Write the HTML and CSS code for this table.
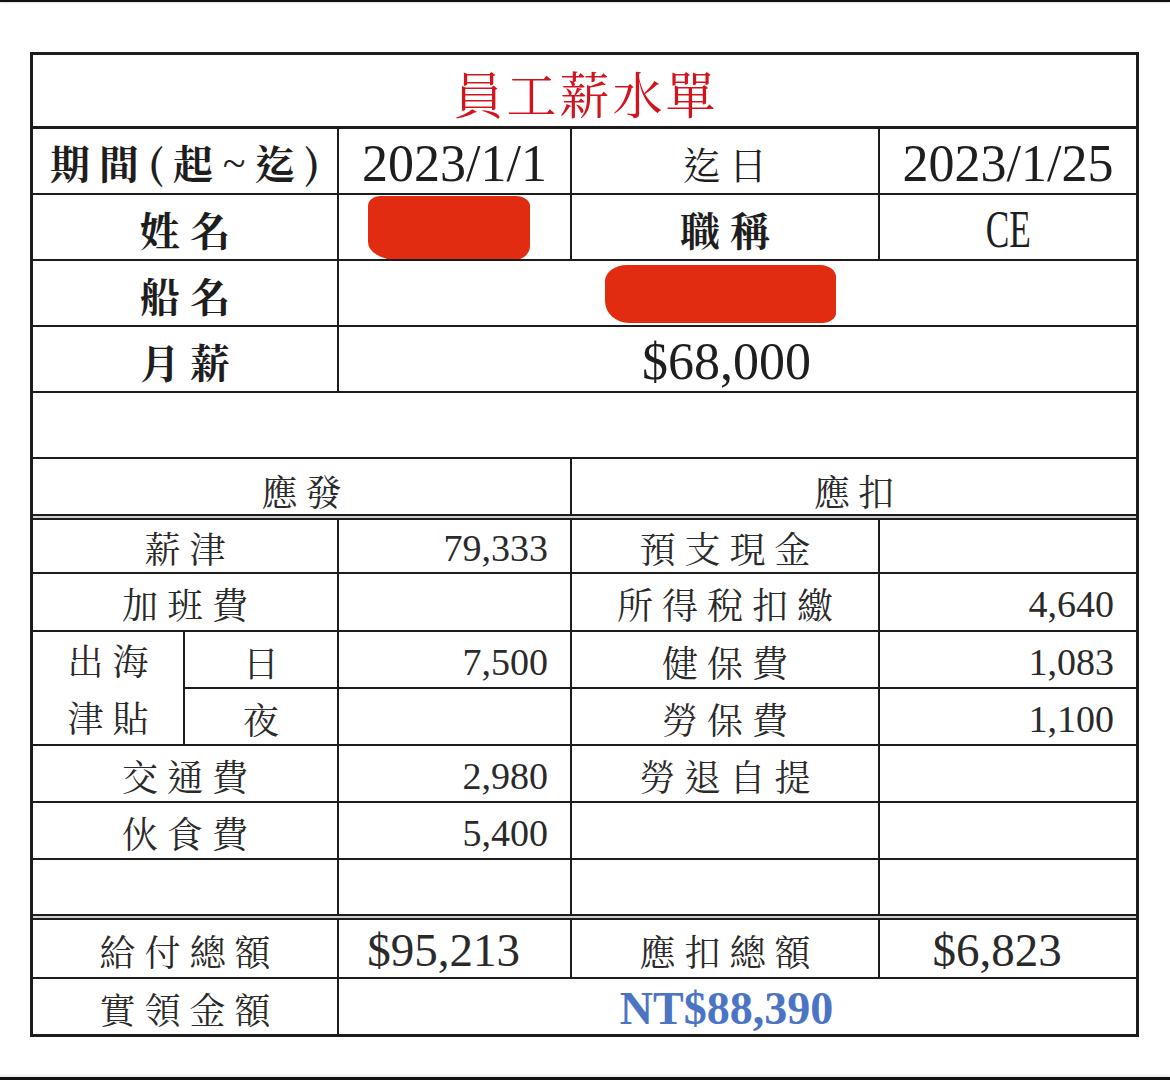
FILE: index.html
```html
<!DOCTYPE html>
<html lang="zh-Hant">
<head>
<meta charset="utf-8">
<title>員工薪水單</title>
<link rel="stylesheet" href="styles.css">
</head>
<body>
<div class="page">
  <div class="edge-top"></div>
  <div class="sheet">
    <div class="cell title span-all">員工薪水單</div>

    <div class="cell lbl-b w12 tight">期間(起~迄)</div>
    <div class="cell num-l">2023/1/1</div>
    <div class="cell lbl-m">迄日</div>
    <div class="cell num-l">2023/1/25</div>

    <div class="cell lbl-b w12">姓名</div>
    <div class="cell"><span class="redact redact-a"></span></div>
    <div class="cell lbl-b">職稱</div>
    <div class="cell num-l"><span class="narrow">CE</span></div>

    <div class="cell lbl-b w12">船名</div>
    <div class="cell w345"><span class="redact redact-b"></span></div>

    <div class="cell lbl-b w12">月薪</div>
    <div class="cell num-l w345 shift">$68,000</div>

    <div class="cell span-all"></div>

    <div class="cell lbl-h w123">應發</div>
    <div class="cell lbl-h w45">應扣</div>

    <div class="sep span-all"></div>

    <div class="cell lbl w12">薪津</div>
    <div class="cell num">79,333</div>
    <div class="cell lbl">預支現金</div>
    <div class="cell num"></div>

    <div class="cell lbl w12">加班費</div>
    <div class="cell num"></div>
    <div class="cell lbl">所得稅扣繳</div>
    <div class="cell num">4,640</div>

    <div class="cell lbl two-line rows2">出海<br>津貼</div>
    <div class="cell lbl">日</div>
    <div class="cell num">7,500</div>
    <div class="cell lbl">健保費</div>
    <div class="cell num">1,083</div>

    <div class="cell lbl">夜</div>
    <div class="cell num"></div>
    <div class="cell lbl">勞保費</div>
    <div class="cell num">1,100</div>

    <div class="cell lbl w12">交通費</div>
    <div class="cell num">2,980</div>
    <div class="cell lbl">勞退自提</div>
    <div class="cell num"></div>

    <div class="cell lbl w12">伙食費</div>
    <div class="cell num">5,400</div>
    <div class="cell"></div>
    <div class="cell"></div>

    <div class="cell w12"></div>
    <div class="cell"></div>
    <div class="cell"></div>
    <div class="cell"></div>

    <div class="sep span-all"></div>

    <div class="cell lbl w12">給付總額</div>
    <div class="cell num-m shift">$95,213</div>
    <div class="cell lbl">應扣總額</div>
    <div class="cell num-m shift">$6,823</div>

    <div class="cell lbl w12">實領金額</div>
    <div class="cell total w345 shift">NT$88,390</div>
  </div>
  <div class="edge-bottom"></div>
</div>
</body>
</html>
```

FILE: styles.css
```css
html, body {
  margin: 0;
  padding: 0;
  background: #ffffff;
}

.page {
  width: 1170px;
  height: 1080px;
  display: flex;
  flex-direction: column;
  overflow: hidden;
}

.edge-top {
  height: 2px;
  background: #111;
  box-shadow: 0 1px 2px rgba(0,0,0,0.15);
}

.edge-bottom {
  margin-top: auto;
  height: 3px;
  background: #111;
  box-shadow: 0 -2px 2px rgba(0,0,0,0.08);
}

.sheet {
  margin: 50px 0 0 30px;
  width: 1109px;
  box-sizing: border-box;
  display: grid;
  grid-template-columns: 150px 152px 231px 306px 256px;
  grid-template-rows: 72px 64px 64px 64px 64px 64px 55px 2px 52px 56px 55px 55px 55px 55px 54px 2px 57px 55px;
  gap: 2px;
  padding: 3px;
  background: #1c1c1c;
}

.cell {
  background: #fff;
  display: flex;
  align-items: center;
  justify-content: center;
  color: #1e1e1e;
  font-family: "Noto Serif CJK TC", "Noto Sans CJK TC", "Liberation Serif", serif;
  line-height: 1;
  white-space: nowrap;
  overflow: hidden;
}

.sep {
  background: #cfcfcf;
}

.span-all { grid-column: 1 / -1; }
.w12 { grid-column: span 2; }
.w123 { grid-column: span 3; }
.w45 { grid-column: span 2; }
.w345 { grid-column: span 3; }
.rows2 { grid-row: span 2; }

.title {
  border-bottom: 1px solid #1c1c1c;
  color: #d4141c;
  font-size: 50px;
  letter-spacing: 3px;
  padding-left: 3px;
  padding-top: 2px;
}

.lbl-b {
  font-weight: 700;
  font-size: 40px;
  letter-spacing: 10px;
  padding-left: 10px;
  padding-top: 4px;
}

.tight {
  letter-spacing: 9px;
  padding-left: 9px;
  padding-top: 2px;
}

.lbl-m {
  font-size: 38px;
  letter-spacing: 8px;
  padding-left: 8px;
  padding-top: 4px;
}

.lbl-h {
  font-size: 36px;
  letter-spacing: 8px;
  padding-left: 8px;
  padding-top: 8px;
  color: #2a2a2a;
}

.lbl {
  font-size: 36px;
  letter-spacing: 9px;
  padding-left: 9px;
  padding-top: 4px;
  color: #2a2a2a;
}

.two-line {
  line-height: 57px;
  padding-top: 0;
  text-align: center;
}

.num-l {
  font-family: "Liberation Serif", serif;
  font-size: 52px;
  padding-top: 6px;
  color: #1e1e1e;
}

.num {
  font-family: "Liberation Serif", serif;
  font-size: 38px;
  justify-content: flex-end;
  padding-right: 22px;
  padding-top: 4px;
  color: #2a2a2a;
}

.num-m {
  font-family: "Liberation Serif", serif;
  font-size: 47px;
  padding-top: 4px;
  color: #2a2a2a;
}

.shift {
  padding-right: 22px;
}

.total {
  font-family: "Liberation Serif", serif;
  font-weight: 700;
  font-size: 46px;
  color: #4c74c4;
  padding-top: 4px;
}

.narrow {
  display: inline-block;
  transform: scaleX(0.68);
}

.redact {
  display: block;
  background: #e22c12;
}

.redact-a {
  width: 162px;
  height: 64px;
  margin: 2px 12px 0 0;
  border-radius: 12px 14px 16px 30px / 10px 10px 14px 18px;
}

.redact-b {
  width: 231px;
  height: 58px;
  margin: 2px 34px 0 0;
  border-radius: 22px 16px 14px 24px / 16px 12px 10px 22px;
}
```
